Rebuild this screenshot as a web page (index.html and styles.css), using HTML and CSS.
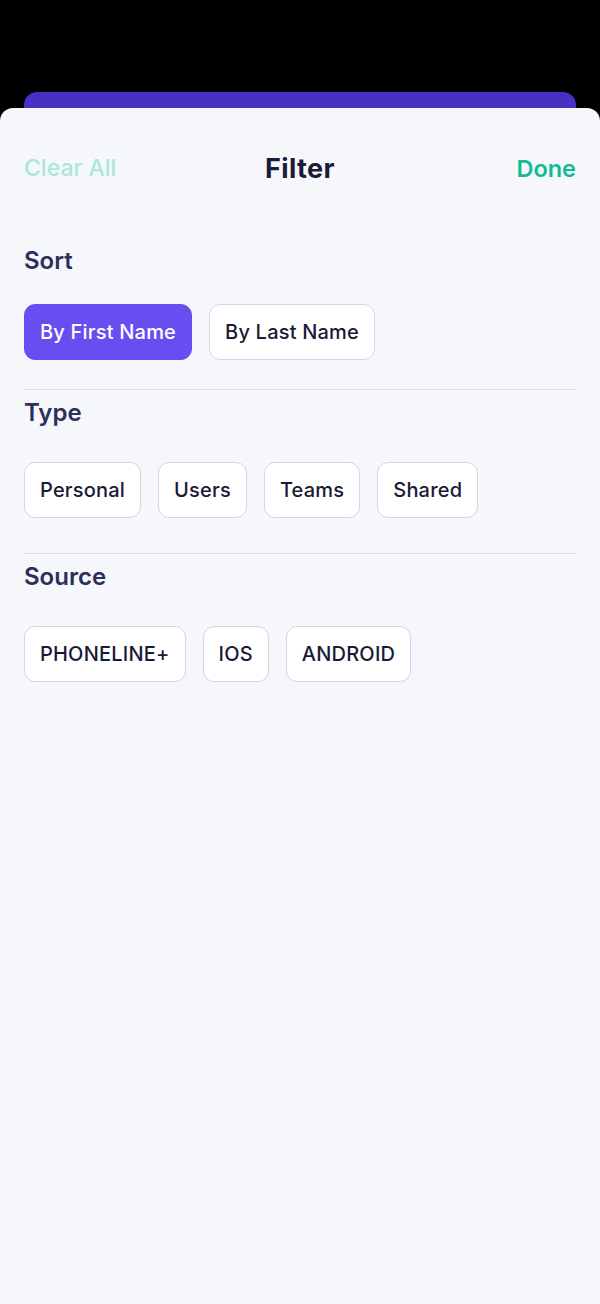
FILE: index.html
```html
<!DOCTYPE html>
<html lang="en">
<head>
<meta charset="utf-8">
<title>Filter</title>
<link rel="stylesheet" href="styles.css">
</head>
<body>
<div class="screen">
  <div class="backcard"></div>
  <div class="sheet">
    <header class="header">
      <span class="clear">Clear All</span>
      <span class="title">Filter</span>
      <span class="done">Done</span>
    </header>

    <section class="section section-first">
      <h2 class="section-title">Sort</h2>
      <div class="chips">
        <span class="chip chip-active">By First Name</span>
        <span class="chip">By Last Name</span>
      </div>
    </section>
    <div class="divider"></div>

    <section class="section">
      <h2 class="section-title">Type</h2>
      <div class="chips">
        <span class="chip">Personal</span>
        <span class="chip">Users</span>
        <span class="chip">Teams</span>
        <span class="chip">Shared</span>
      </div>
    </section>
    <div class="divider"></div>

    <section class="section">
      <h2 class="section-title">Source</h2>
      <div class="chips">
        <span class="chip">PHONELINE+</span>
        <span class="chip">IOS</span>
        <span class="chip">ANDROID</span>
      </div>
    </section>
  </div>
</div>
</body>
</html>
```

FILE: styles.css
```css
* { box-sizing: border-box; }
html, body {
  margin: 0;
  padding: 0;
  background: #000;
}
body {
  font-family: "Inter", "Noto Sans", sans-serif;
  width: 600px;
  height: 1304px;
  overflow: hidden;
}
.screen {
  display: flex;
  flex-direction: column;
  height: 1304px;
  padding-top: 92px;
}
.backcard {
  margin: 0 24px;
  height: 16px;
  background: #4a2fc5;
  border-radius: 13px 13px 0 0;
}
.sheet {
  flex: 1;
  background: #f6f7fb;
  border-radius: 13px 13px 0 0;
  padding: 0 24px;
}
.header {
  display: flex;
  justify-content: space-between;
  align-items: center;
  height: 32px;
  margin-top: 44px;
}
.clear {
  font-size: 23px;
  font-weight: 500;
  color: #a9e7d9;
  width: 130px;
}
.title {
  font-size: 27px;
  font-weight: 700;
  letter-spacing: 0.4px;
  color: #1b1c38;
}
.done {
  font-size: 23.5px;
  font-weight: 600;
  color: #12bb98;
  width: 130px;
  text-align: right;
}
.section {
  padding-top: 9px;
  padding-bottom: 35px;
}
.section-first {
  padding-top: 63px;
  padding-bottom: 29px;
}
.section-title {
  margin: 0;
  font-size: 24px;
  line-height: 28px;
  font-weight: 600;
  color: #2c2e5c;
}
.chips {
  display: flex;
  gap: 17px;
  margin-top: 35px;
}
.section-first .chips { margin-top: 29px; }
.chip {
  display: flex;
  align-items: center;
  height: 56px;
  padding: 0 15px;
  border-radius: 11px;
  background: #fff;
  border: 1.5px solid #d4d4ea;
  font-size: 20px;
  letter-spacing: 0.2px;
  font-weight: 500;
  color: #1a1a36;
}
.chip-active {
  background: #6a4df0;
  border-color: #6a4df0;
  color: #fff;
}
.divider {
  height: 1px;
  background: #dfe0e8;
}
```
